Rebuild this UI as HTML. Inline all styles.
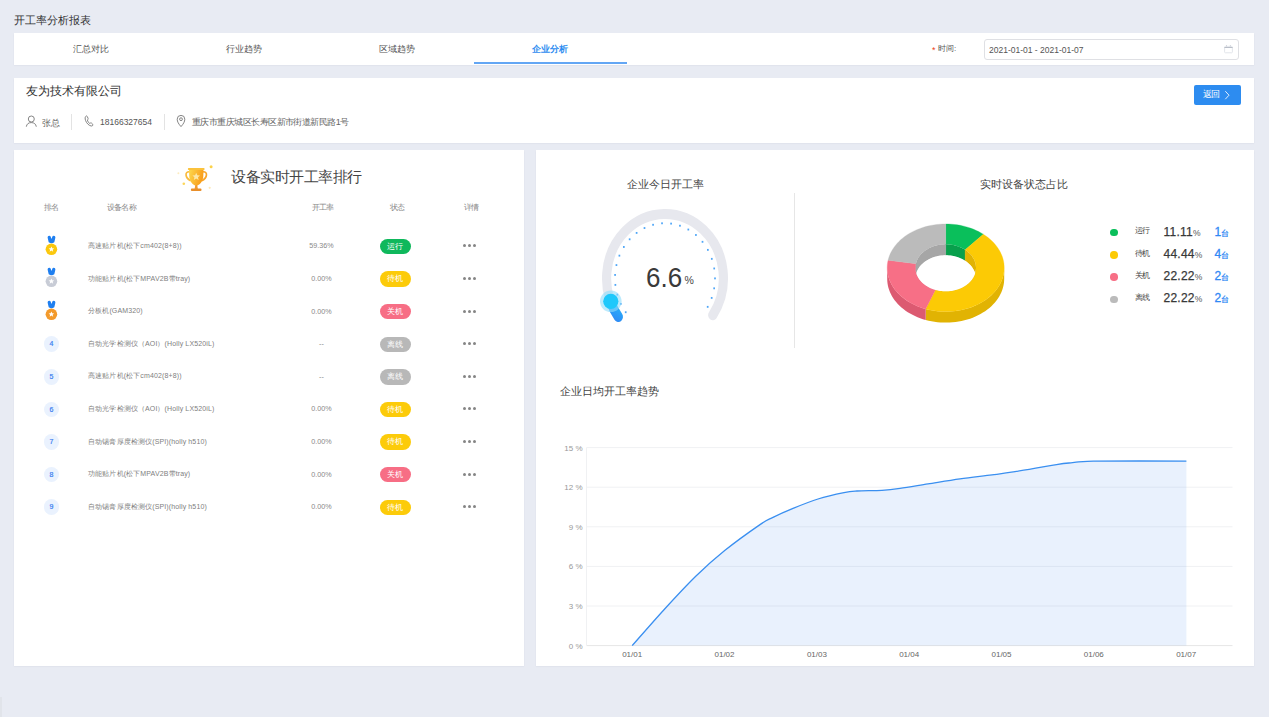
<!DOCTYPE html>
<html><head><meta charset="utf-8">
<style>
*{margin:0;padding:0;box-sizing:border-box}
html,body{width:1269px;height:717px;overflow:hidden;background:#e8ebf3;font-family:"Liberation Sans",sans-serif;color:#333}
.a{position:absolute;white-space:nowrap;line-height:1}
.card{position:absolute;background:#fff;box-shadow:0 0.5px 1.5px rgba(60,70,100,0.10)}
.tab{position:absolute;top:45px;width:153px;text-align:center;font-size:9px;color:#555;line-height:1}
.hd{position:absolute;top:204px;font-size:8px;letter-spacing:-0.8px;color:#888;line-height:1;white-space:nowrap}
.nm{position:absolute;left:88px;font-size:7px;letter-spacing:0.13px;color:#808080;line-height:1;white-space:nowrap}
.rt{position:absolute;left:291.5px;width:60px;text-align:center;font-size:7.2px;color:#888;line-height:1;margin-top:-0.7px}
.bd{position:absolute;left:380px;width:30.5px;height:15.4px;border-radius:8px;color:#fff;font-size:8px;line-height:15.4px;text-align:center;margin-top:-0.2px}
.dots{position:absolute;left:463px;width:13px;height:3px}
.dots i{position:absolute;top:0.2px;width:3px;height:3px;border-radius:50%;background:#858585}
.rk{position:absolute;left:43.8px;margin-top:-0.4px;width:15.5px;height:15.5px;border-radius:50%;background:#eaf2fe;color:#3a7ef0;font-size:7px;-webkit-text-stroke:0.2px #3a7ef0;line-height:15.5px;text-align:center}
</style></head><body>
<div class="a" style="left:14px;top:15px;font-size:11px;color:#333">开工率分析报表</div>
<div class="card" style="left:14px;top:33px;width:1240px;height:32px"></div>
<div class="tab" style="left:14px">汇总对比</div>
<div class="tab" style="left:167px">行业趋势</div>
<div class="tab" style="left:320px">区域趋势</div>
<div class="tab" style="left:473px;color:#2d8cf0;font-weight:bold">企业分析</div>
<div class="a" style="left:474px;top:62px;width:153px;height:2px;background:#63a6f4"></div>
<div class="a" style="left:932px;top:46px;font-size:9px;color:#ed4014">*</div>
<div class="a" style="left:938px;top:45px;font-size:8px;color:#555">时间:</div>
<div class="a" style="left:984px;top:39px;width:255px;height:21px;border:1.4px solid #dfe0e4;border-radius:3px"></div>
<div class="a" style="left:989px;top:45.5px;font-size:8.5px;color:#555">2021-01-01 - 2021-01-07</div>
<svg class="a" style="left:1220px;top:40px" width="16" height="16" viewBox="1220 40 16 16"><rect x="1224.6" y="46.4" width="7.8" height="6.4" rx="0.9" fill="none" stroke="#dfe2e8" stroke-width="0.9"/><line x1="1224.4" y1="47.5" x2="1232.6" y2="47.5" stroke="#b9bec8" stroke-width="1"/><line x1="1226.5" y1="45" x2="1226.5" y2="46.6" stroke="#d0d3da" stroke-width="0.9"/><line x1="1230.4" y1="45" x2="1230.4" y2="46.6" stroke="#d0d3da" stroke-width="0.9"/></svg>

<div class="card" style="left:14px;top:78px;width:1240px;height:65px"></div>
<div class="a" style="left:26px;top:85px;font-size:12px;color:#333">友为技术有限公司</div>
<svg class="a" style="left:25px;top:114px" width="13" height="14" viewBox="0 0 13 14"><circle cx="6.3" cy="5" r="3" fill="none" stroke="#777" stroke-width="0.9"/><path d="M1.3 12.7 Q2 8.6 6.3 8.6 Q10.6 8.6 11.3 12.7" fill="none" stroke="#777" stroke-width="0.9"/></svg>
<div class="a" style="left:42px;top:118.5px;font-size:9px;letter-spacing:-0.5px;color:#666">张总</div>
<div class="a" style="left:71px;top:114px;width:1px;height:16px;background:#e3e3e3"></div>
<svg class="a" style="left:84px;top:115px" width="10" height="12" viewBox="0 0 10 12"><path d="M2.3 1 C1 1.6 0.8 3.4 1.6 5.6 C2.6 8.2 4.8 10.6 7.2 11 C8.4 11.2 9.2 10.2 8.8 9.4 L7.4 8 C6.8 7.6 6.2 8.2 5.6 8.4 C4.6 7.8 3.6 6.2 3.4 5 C3.8 4.4 4.4 4 4 3.2 L3.2 1.4 C2.9 0.9 2.6 0.9 2.3 1 Z" fill="none" stroke="#777" stroke-width="0.9"/></svg>
<div class="a" style="left:100px;top:118px;font-size:8.5px;color:#555">18166327654</div>
<div class="a" style="left:164px;top:114px;width:1px;height:16px;background:#e3e3e3"></div>
<svg class="a" style="left:176px;top:114px" width="10" height="14" viewBox="0 0 10 14"><path d="M5 12.6 C2.6 10 1.2 7.6 1.2 5.2 A3.8 3.8 0 0 1 8.8 5.2 C8.8 7.6 7.4 10 5 12.6 Z" fill="none" stroke="#777" stroke-width="0.9"/><circle cx="5" cy="5.2" r="1.4" fill="none" stroke="#777" stroke-width="0.9"/></svg>
<div class="a" style="left:192px;top:118px;font-size:9px;letter-spacing:-0.55px;color:#666">重庆市重庆城区长寿区新市街道新民路1号</div>
<div class="a" style="left:1194px;top:85px;width:47px;height:20px;background:#2d8cf0;border-radius:2px"></div>
<div class="a" style="left:1203px;top:90.2px;font-size:9px;letter-spacing:-1px;color:#fff">返回</div>
<svg class="a" style="left:1223px;top:89px" width="8" height="12" viewBox="0 0 8 12"><path d="M2.3 2.2 L6 6.2 L2.3 10.2" fill="none" stroke="#fff" stroke-width="0.85"/></svg>

<div class="card" style="left:14px;top:150px;width:510px;height:516px"></div>
<div class="card" style="left:536px;top:150px;width:718px;height:516px"></div>

<div class="a" style="left:0;top:697px;width:1.5px;height:20px;background:#e1e4ea"></div>
<!-- LEFT_PANEL -->
<svg class="a" style="left:175px;top:160px" width="40" height="35" viewBox="0 0 40 35">
<defs><linearGradient id="tg" x1="0" y1="0" x2="1" y2="0.3"><stop offset="0" stop-color="#fdd84e"/><stop offset="1" stop-color="#f99d1a"/></linearGradient></defs>
<path d="M14.6 11.8 C9.6 11.2 9.8 17.6 15.6 20.8" fill="none" stroke="#f9bb3e" stroke-width="1.7"/>
<path d="M27.9 11.8 C32.9 11.2 32.7 17.6 26.9 20.8" fill="none" stroke="#f8a52a" stroke-width="1.7"/>
<path d="M14 9.6 L28.5 9.6 L28.3 16 C28 21.5 24.6 25.6 21.25 25.6 C17.9 25.6 14.5 21.5 14.2 16 Z" fill="url(#tg)"/>
<rect x="12.9" y="8" width="16.7" height="2.1" rx="0.8" fill="#fbc23c"/>
<path d="M20.3 25 L22.2 25 L22.9 28.9 L19.6 28.9 Z" fill="#f29a2c"/>
<rect x="15.9" y="28.6" width="10.6" height="2.3" rx="1" fill="#e98f2a"/>
<path d="M21.2 12.8 L22.3 15.3 L25 15.5 L23 17.3 L23.6 20 L21.2 18.6 L18.8 20 L19.4 17.3 L17.4 15.5 L20.1 15.3 Z" fill="#fde7a6"/>
<circle cx="36.1" cy="6.8" r="1.5" fill="#fbd24a"/>
<circle cx="8.8" cy="23.7" r="1.3" fill="#fcd65a"/>
<circle cx="3.4" cy="13.2" r="1" fill="#fdecc0"/>
<circle cx="34.7" cy="27.8" r="1.1" fill="#fde8b8"/>
</svg>
<div class="a" style="left:231px;top:169px;font-size:15px;letter-spacing:-0.5px;color:#444">设备实时开工率排行</div>
<div class="hd" style="left:44px">排名</div>
<div class="hd" style="left:107px">设备名称</div>
<div class="hd" style="left:312px">开工率</div>
<div class="hd" style="left:390px">状态</div>
<div class="hd" style="left:464px">详情</div>
<svg class="a" style="left:44px;top:234.5px" width="15" height="21" viewBox="0 0 15 21"><path d="M3.6 2.4 Q3.6 0.6 5.3 0.7 Q6.3 0.8 6.6 1.6 L7.5 4 L8.4 1.6 Q8.7 0.8 9.7 0.7 Q11.4 0.6 11.4 2.4 L10.3 7.2 Q7.5 9.4 4.7 7.2 Z" fill="#1f7ff0"/><circle cx="7.4" cy="14.3" r="5.8" fill="#fbc80e"/><path d="M7.4 11.4 L8.2 13.3 L10.2 13.4 L8.6 14.7 L9.2 16.7 L7.4 15.6 L5.6 16.7 L6.2 14.7 L4.6 13.4 L6.6 13.3 Z" fill="#fff"/></svg>
<div class="nm" style="top:242.0px" data-x1="183.1">高速贴片机(松下cm402(8+8))</div>
<div class="rt" style="top:243.0px">59.36%</div>
<div class="bd" style="top:238.9px;background:#0fb85c">运行</div>
<div class="dots" style="top:244.3px"><i style="left:0"></i><i style="left:5px"></i><i style="left:10px"></i></div>
<svg class="a" style="left:44px;top:267.1px" width="15" height="21" viewBox="0 0 15 21"><path d="M3.6 2.4 Q3.6 0.6 5.3 0.7 Q6.3 0.8 6.6 1.6 L7.5 4 L8.4 1.6 Q8.7 0.8 9.7 0.7 Q11.4 0.6 11.4 2.4 L10.3 7.2 Q7.5 9.4 4.7 7.2 Z" fill="#1f7ff0"/><circle cx="7.4" cy="14.3" r="5.8" fill="#c8ccd6"/><path d="M7.4 11.4 L8.2 13.3 L10.2 13.4 L8.6 14.7 L9.2 16.7 L7.4 15.6 L5.6 16.7 L6.2 14.7 L4.6 13.4 L6.6 13.3 Z" fill="#fff"/></svg>
<div class="nm" style="top:274.6px" data-x1="191.1">功能贴片机(松下MPAV2B带tray)</div>
<div class="rt" style="top:275.6px">0.00%</div>
<div class="bd" style="top:271.5px;background:#fccb0a">待机</div>
<div class="dots" style="top:276.9px"><i style="left:0"></i><i style="left:5px"></i><i style="left:10px"></i></div>
<svg class="a" style="left:44px;top:299.7px" width="15" height="21" viewBox="0 0 15 21"><path d="M3.6 2.4 Q3.6 0.6 5.3 0.7 Q6.3 0.8 6.6 1.6 L7.5 4 L8.4 1.6 Q8.7 0.8 9.7 0.7 Q11.4 0.6 11.4 2.4 L10.3 7.2 Q7.5 9.4 4.7 7.2 Z" fill="#1f7ff0"/><circle cx="7.4" cy="14.3" r="5.8" fill="#f39a2b"/><path d="M7.4 11.4 L8.2 13.3 L10.2 13.4 L8.6 14.7 L9.2 16.7 L7.4 15.6 L5.6 16.7 L6.2 14.7 L4.6 13.4 L6.6 13.3 Z" fill="#fff"/></svg>
<div class="nm" style="top:307.2px" data-x1="143.6">分板机(GAM320)</div>
<div class="rt" style="top:308.2px">0.00%</div>
<div class="bd" style="top:304.1px;background:#f76e85">关机</div>
<div class="dots" style="top:309.5px"><i style="left:0"></i><i style="left:5px"></i><i style="left:10px"></i></div>
<div class="rk" style="top:336.8px">4</div>
<div class="nm" style="top:339.8px" data-x1="215.7">自动光学检测仪（AOI）(Holly LX520iL)</div>
<div class="rt" style="top:340.8px">--</div>
<div class="bd" style="top:336.7px;background:#b8b8b8">离线</div>
<div class="dots" style="top:342.1px"><i style="left:0"></i><i style="left:5px"></i><i style="left:10px"></i></div>
<div class="rk" style="top:369.4px">5</div>
<div class="nm" style="top:372.4px" data-x1="183.1">高速贴片机(松下cm402(8+8))</div>
<div class="rt" style="top:373.4px">--</div>
<div class="bd" style="top:369.3px;background:#b8b8b8">离线</div>
<div class="dots" style="top:374.7px"><i style="left:0"></i><i style="left:5px"></i><i style="left:10px"></i></div>
<div class="rk" style="top:402.0px">6</div>
<div class="nm" style="top:405.0px" data-x1="215.6">自动光学检测仪（AOI）(Holly LX520iL)</div>
<div class="rt" style="top:406.0px">0.00%</div>
<div class="bd" style="top:401.9px;background:#fccb0a">待机</div>
<div class="dots" style="top:407.3px"><i style="left:0"></i><i style="left:5px"></i><i style="left:10px"></i></div>
<div class="rk" style="top:434.6px">7</div>
<div class="nm" style="top:437.6px" data-x1="208">自动锡膏厚度检测仪(SPI)(holly h510)</div>
<div class="rt" style="top:438.6px">0.00%</div>
<div class="bd" style="top:434.5px;background:#fccb0a">待机</div>
<div class="dots" style="top:439.9px"><i style="left:0"></i><i style="left:5px"></i><i style="left:10px"></i></div>
<div class="rk" style="top:467.2px">8</div>
<div class="nm" style="top:470.2px" data-x1="191.3">功能贴片机(松下MPAV2B带tray)</div>
<div class="rt" style="top:471.2px">0.00%</div>
<div class="bd" style="top:467.1px;background:#f76e85">关机</div>
<div class="dots" style="top:472.5px"><i style="left:0"></i><i style="left:5px"></i><i style="left:10px"></i></div>
<div class="rk" style="top:499.8px">9</div>
<div class="nm" style="top:502.8px" data-x1="208">自动锡膏厚度检测仪(SPI)(holly h510)</div>
<div class="rt" style="top:503.8px">0.00%</div>
<div class="bd" style="top:499.7px;background:#fccb0a">待机</div>
<div class="dots" style="top:505.1px"><i style="left:0"></i><i style="left:5px"></i><i style="left:10px"></i></div>
<!-- /LEFT_PANEL -->
<!-- RIGHT_PANEL -->
<svg class="a" style="left:585px;top:195px" width="160" height="140" viewBox="0 0 160 140">
<defs><linearGradient id="pg" x1="0" y1="1" x2="0.3" y2="0"><stop offset="0" stop-color="#2d8df6"/><stop offset="1" stop-color="#26b4fb"/></linearGradient></defs>
<g transform="translate(80.00 83.20) scale(1 1.1)">
<path d="M-46.64 35.15 A58.4 58.4 0 1 1 47.72 33.66" fill="none" stroke="#e7e8ee" stroke-width="9.2" stroke-linecap="round"/>
<rect x="-40.14" y="30.07" width="1.7" height="1.7" fill="#4fa6f7"/><rect x="-45.08" y="22.47" width="1.7" height="1.7" fill="#4fa6f7"/><rect x="-48.56" y="14.10" width="1.7" height="1.7" fill="#4fa6f7"/><rect x="-50.48" y="5.24" width="1.7" height="1.7" fill="#4fa6f7"/><rect x="-50.76" y="-3.82" width="1.7" height="1.7" fill="#4fa6f7"/><rect x="-49.41" y="-12.78" width="1.7" height="1.7" fill="#4fa6f7"/><rect x="-46.46" y="-21.35" width="1.7" height="1.7" fill="#4fa6f7"/><rect x="-42.01" y="-29.24" width="1.7" height="1.7" fill="#4fa6f7"/><rect x="-36.21" y="-36.21" width="1.7" height="1.7" fill="#4fa6f7"/><rect x="-29.24" y="-42.01" width="1.7" height="1.7" fill="#4fa6f7"/><rect x="-21.35" y="-46.46" width="1.7" height="1.7" fill="#4fa6f7"/><rect x="-12.78" y="-49.41" width="1.7" height="1.7" fill="#4fa6f7"/><rect x="-3.82" y="-50.76" width="1.7" height="1.7" fill="#4fa6f7"/><rect x="5.24" y="-50.48" width="1.7" height="1.7" fill="#4fa6f7"/><rect x="14.10" y="-48.56" width="1.7" height="1.7" fill="#4fa6f7"/><rect x="22.47" y="-45.08" width="1.7" height="1.7" fill="#4fa6f7"/><rect x="30.07" y="-40.14" width="1.7" height="1.7" fill="#4fa6f7"/><rect x="36.66" y="-33.92" width="1.7" height="1.7" fill="#4fa6f7"/><rect x="42.01" y="-26.60" width="1.7" height="1.7" fill="#4fa6f7"/><rect x="45.95" y="-18.44" width="1.7" height="1.7" fill="#4fa6f7"/><rect x="48.36" y="-9.70" width="1.7" height="1.7" fill="#4fa6f7"/><rect x="49.15" y="-0.68" width="1.7" height="1.7" fill="#4fa6f7"/><rect x="48.30" y="8.35" width="1.7" height="1.7" fill="#4fa6f7"/><rect x="45.83" y="17.07" width="1.7" height="1.7" fill="#4fa6f7"/><rect x="41.83" y="25.20" width="1.7" height="1.7" fill="#4fa6f7"/>
<path d="M-46.64 35.15 A58.4 58.4 0 0 1 -54.70 20.45" fill="none" stroke="url(#pg)" stroke-width="9.2" stroke-linecap="round"/>
</g>
<g transform="translate(80.00 83.20)">
<circle cx="-54.20" cy="23.10" r="10.8" fill="#8fdcfa" opacity="0.6"/>
<circle cx="-54.20" cy="23.10" r="7.6" fill="#1ec8fb"/>
</g></svg>
<div class="a" style="left:627px;top:178.5px;font-size:11px;color:#444">企业今日开工率</div>
<div class="a" style="left:646px;top:263.5px;font-size:26px;color:#3a3a3a;transform:scaleY(1.05);transform-origin:0 0;line-height:1">6.6</div>
<div class="a" style="left:684.5px;top:275px;font-size:10.5px;color:#444;line-height:1">%</div>
<div class="a" style="left:793.5px;top:193px;width:1px;height:155px;background:#e6e6e6"></div>
<div class="a" style="left:980px;top:178.5px;font-size:11px;color:#444">实时设备状态占比</div>
<svg class="a" style="left:0;top:0" width="1269" height="717" viewBox="0 0 1269 717"><path d="M1004.20 267.80 L1004.12 270.07 L1003.89 272.34 L1003.49 274.59 L1002.94 276.83 L1002.24 279.04 L1001.39 281.22 L1000.38 283.36 L999.23 285.46 L997.94 287.52 L996.50 289.52 L994.93 291.46 L993.22 293.34 L991.39 295.15 L989.43 296.89 L987.36 298.55 L985.17 300.13 L982.88 301.62 L980.49 303.02 L978.00 304.32 L975.43 305.52 L972.77 306.63 L970.05 307.63 L967.26 308.52 L964.41 309.30 L961.51 309.97 L958.56 310.53 L955.59 310.97 L952.58 311.30 L949.56 311.50 L946.53 311.60 L943.49 311.57 L940.46 311.42 L937.45 311.16 L934.46 310.78 L931.49 310.29 L928.57 309.68 L925.69 308.96 L925.69 319.96 L928.57 320.68 L931.49 321.29 L934.46 321.78 L937.45 322.16 L940.46 322.42 L943.49 322.57 L946.53 322.60 L949.56 322.50 L952.58 322.30 L955.59 321.97 L958.56 321.53 L961.51 320.97 L964.41 320.30 L967.26 319.52 L970.05 318.63 L972.77 317.63 L975.43 316.52 L978.00 315.32 L980.49 314.02 L982.88 312.62 L985.17 311.13 L987.36 309.55 L989.43 307.89 L991.39 306.15 L993.22 304.34 L994.93 302.46 L996.50 300.52 L997.94 298.52 L999.23 296.46 L1000.38 294.36 L1001.39 292.22 L1002.24 290.04 L1002.94 287.83 L1003.49 285.59 L1003.89 283.34 L1004.12 281.07 L1004.20 278.80 Z" fill="#e1b303"/><path d="M925.69 308.96 L922.92 308.14 L920.21 307.22 L917.56 306.20 L914.99 305.08 L912.50 303.86 L910.09 302.55 L907.77 301.15 L905.55 299.66 L903.44 298.09 L901.44 296.44 L899.55 294.72 L897.78 292.92 L896.13 291.06 L894.62 289.15 L893.23 287.17 L891.98 285.15 L890.87 283.08 L889.91 280.97 L889.08 278.83 L888.41 276.66 L887.88 274.46 L887.50 272.25 L887.28 270.03 L887.20 267.80 L887.20 278.80 L887.28 281.03 L887.50 283.25 L887.88 285.46 L888.41 287.66 L889.08 289.83 L889.91 291.97 L890.87 294.08 L891.98 296.15 L893.23 298.17 L894.62 300.15 L896.13 302.06 L897.78 303.92 L899.55 305.72 L901.44 307.44 L903.44 309.09 L905.55 310.66 L907.77 312.15 L910.09 313.55 L912.50 314.86 L914.99 316.08 L917.56 317.20 L920.21 318.22 L922.92 319.14 L925.69 319.96 Z" fill="#dc5a71"/><path d="M945.70 224.00 L948.62 224.05 L951.52 224.22 L954.42 224.49 L957.29 224.87 L960.14 225.35 L962.94 225.95 L965.71 226.64 L968.42 227.44 L971.08 228.34 L973.68 229.33 L976.20 230.43 L978.65 231.61 L981.02 232.89 L983.30 234.25 L965.18 249.80 L964.00 249.07 L962.77 248.38 L961.50 247.75 L960.19 247.16 L958.85 246.63 L957.47 246.15 L956.06 245.72 L954.63 245.34 L953.18 245.03 L951.70 244.77 L950.22 244.56 L948.72 244.42 L947.21 244.33 L945.70 244.30 Z" fill="#0abf5b" stroke="#0abf5b" stroke-width="0.3"/><path d="M983.30 234.25 L985.57 235.75 L987.73 237.33 L989.78 239.00 L991.71 240.74 L993.51 242.56 L995.19 244.45 L996.74 246.39 L998.15 248.40 L999.42 250.45 L1000.54 252.55 L1001.52 254.70 L1002.35 256.87 L1003.03 259.08 L1003.55 261.31 L1003.93 263.56 L1004.14 265.82 L1004.20 268.08 L1004.10 270.35 L1003.85 272.60 L1003.44 274.85 L1002.87 277.07 L1002.16 279.27 L1001.29 281.44 L1000.27 283.58 L999.11 285.67 L997.81 287.71 L996.36 289.70 L994.78 291.63 L993.07 293.50 L991.23 295.30 L989.28 297.02 L987.20 298.67 L985.01 300.24 L982.72 301.71 L980.33 303.10 L977.85 304.39 L975.28 305.59 L972.63 306.68 L969.91 307.67 L967.12 308.56 L964.28 309.33 L961.39 310.00 L958.45 310.55 L955.49 310.98 L952.49 311.30 L949.48 311.51 L946.46 311.60 L943.43 311.57 L940.41 311.42 L937.41 311.16 L934.43 310.78 L931.47 310.29 L928.56 309.68 L925.69 308.96 L935.34 289.88 L936.82 290.27 L938.33 290.59 L939.86 290.86 L941.41 291.06 L942.96 291.20 L944.53 291.28 L946.09 291.30 L947.66 291.25 L949.22 291.14 L950.77 290.97 L952.31 290.73 L953.83 290.44 L955.32 290.08 L956.80 289.67 L958.24 289.19 L959.65 288.66 L961.02 288.08 L962.35 287.43 L963.64 286.74 L964.87 286.00 L966.06 285.20 L967.19 284.36 L968.27 283.48 L969.28 282.55 L970.24 281.59 L971.12 280.59 L971.94 279.55 L972.69 278.48 L973.36 277.39 L973.97 276.26 L974.49 275.12 L974.94 273.96 L975.31 272.78 L975.61 271.58 L975.82 270.38 L975.95 269.17 L976.00 267.95 L975.97 266.74 L975.86 265.52 L975.67 264.32 L975.39 263.12 L975.04 261.94 L974.61 260.77 L974.11 259.62 L973.52 258.49 L972.86 257.39 L972.13 256.31 L971.33 255.27 L970.46 254.26 L969.53 253.28 L968.53 252.35 L967.47 251.45 L966.35 250.60 L965.18 249.80 Z" fill="#fcca05" stroke="#fcca05" stroke-width="0.3"/><path d="M925.69 308.96 L922.88 308.13 L920.12 307.19 L917.44 306.15 L914.83 305.00 L912.30 303.76 L909.86 302.42 L907.52 300.99 L905.28 299.46 L903.15 297.86 L901.13 296.17 L899.23 294.41 L897.46 292.57 L895.81 290.67 L894.30 288.71 L892.92 286.69 L891.69 284.63 L890.60 282.51 L889.66 280.36 L888.87 278.18 L888.22 275.96 L887.74 273.73 L887.41 271.48 L887.23 269.22 L887.21 266.95 L887.35 264.69 L887.64 262.43 L888.09 260.19 L915.86 263.72 L915.63 264.92 L915.48 266.13 L915.41 267.34 L915.42 268.56 L915.51 269.77 L915.68 270.98 L915.93 272.18 L916.26 273.37 L916.67 274.54 L917.16 275.69 L917.73 276.83 L918.36 277.94 L919.08 279.02 L919.86 280.07 L920.71 281.09 L921.63 282.08 L922.62 283.02 L923.66 283.93 L924.76 284.79 L925.93 285.61 L927.14 286.37 L928.40 287.09 L929.71 287.76 L931.06 288.38 L932.45 288.93 L933.88 289.44 L935.34 289.88 Z" fill="#f76f86" stroke="#f76f86" stroke-width="0.3"/><path d="M888.09 260.19 L888.69 257.97 L889.45 255.78 L890.35 253.62 L891.40 251.50 L892.60 249.42 L893.94 247.39 L895.42 245.41 L897.03 243.50 L898.78 241.64 L900.64 239.86 L902.63 238.16 L904.74 236.53 L906.95 234.99 L909.27 233.53 L911.68 232.17 L914.19 230.90 L916.78 229.73 L919.45 228.66 L922.18 227.70 L924.98 226.84 L927.84 226.09 L930.74 225.46 L933.69 224.93 L936.66 224.53 L939.66 224.23 L942.68 224.06 L945.70 224.00 L945.70 244.30 L944.13 244.33 L942.57 244.43 L941.02 244.58 L939.48 244.80 L937.95 245.08 L936.45 245.42 L934.97 245.82 L933.52 246.28 L932.10 246.80 L930.72 247.37 L929.38 248.00 L928.08 248.68 L926.83 249.41 L925.63 250.19 L924.48 251.02 L923.39 251.90 L922.36 252.81 L921.40 253.77 L920.49 254.76 L919.66 255.79 L918.89 256.85 L918.20 257.94 L917.58 259.05 L917.03 260.19 L916.56 261.35 L916.17 262.53 L915.86 263.72 Z" fill="#bbbbbb" stroke="#bbbbbb" stroke-width="0.3"/><clipPath id="hc"><path d="M945.70 244.30 L947.27 244.33 L948.84 244.43 L950.40 244.58 L951.95 244.81 L953.48 245.09 L954.99 245.43 L956.47 245.84 L957.93 246.30 L959.35 246.82 L960.74 247.40 L962.08 248.03 L963.38 248.72 L964.64 249.45 L965.84 250.24 L966.99 251.08 L968.08 251.95 L969.11 252.88 L970.07 253.84 L970.98 254.84 L971.81 255.87 L972.57 256.94 L973.26 258.04 L973.88 259.16 L974.42 260.31 L974.88 261.47 L975.27 262.66 L975.57 263.85 L975.79 265.06 L975.94 266.28 L976.00 267.49 L975.98 268.71 L975.87 269.93 L975.69 271.14 L975.43 272.35 L975.08 273.54 L974.66 274.71 L974.16 275.87 L973.58 277.00 L972.93 278.11 L972.20 279.20 L971.40 280.25 L970.53 281.27 L969.60 282.25 L968.60 283.19 L967.54 284.09 L966.42 284.95 L965.24 285.76 L964.02 286.52 L962.74 287.23 L961.41 287.89 L960.05 288.50 L958.64 289.05 L957.20 289.54 L955.73 289.97 L954.24 290.35 L952.72 290.66 L951.18 290.91 L949.62 291.10 L948.06 291.23 L946.49 291.29 L944.91 291.29 L943.34 291.23 L941.78 291.10 L940.22 290.91 L938.68 290.66 L937.16 290.35 L935.67 289.97 L934.20 289.54 L932.76 289.05 L931.35 288.50 L929.99 287.89 L928.66 287.23 L927.38 286.52 L926.16 285.76 L924.98 284.95 L923.86 284.09 L922.80 283.19 L921.80 282.25 L920.87 281.27 L920.00 280.25 L919.20 279.20 L918.47 278.11 L917.82 277.00 L917.24 275.87 L916.74 274.71 L916.32 273.54 L915.97 272.35 L915.71 271.14 L915.53 269.93 L915.42 268.71 L915.40 267.49 L915.46 266.28 L915.61 265.06 L915.83 263.85 L916.13 262.66 L916.52 261.47 L916.98 260.31 L917.52 259.16 L918.14 258.04 L918.83 256.94 L919.59 255.87 L920.42 254.84 L921.33 253.84 L922.29 252.88 L923.32 251.95 L924.41 251.08 L925.56 250.24 L926.76 249.45 L928.02 248.72 L929.32 248.03 L930.66 247.40 L932.05 246.82 L933.47 246.30 L934.93 245.84 L936.41 245.43 L937.92 245.09 L939.45 244.81 L941.00 244.58 L942.56 244.43 L944.13 244.33 L945.70 244.30 Z"/></clipPath><g clip-path="url(#hc)"><path d="M945.70 244.30 L947.21 244.33 L948.72 244.42 L950.22 244.56 L951.70 244.77 L953.18 245.03 L954.63 245.34 L956.06 245.72 L957.47 246.15 L958.85 246.63 L960.19 247.16 L961.50 247.75 L962.77 248.38 L964.00 249.07 L965.18 249.80 L965.18 260.80 L964.00 260.07 L962.77 259.38 L961.50 258.75 L960.19 258.16 L958.85 257.63 L957.47 257.15 L956.06 256.72 L954.63 256.34 L953.18 256.03 L951.70 255.77 L950.22 255.56 L948.72 255.42 L947.21 255.33 L945.70 255.30 Z" fill="#08a04c" stroke="#08a04c" stroke-width="0.4"/><path d="M965.18 249.80 L966.35 250.60 L967.47 251.45 L968.53 252.35 L969.53 253.28 L970.46 254.26 L971.33 255.27 L972.13 256.31 L972.86 257.39 L973.52 258.49 L974.11 259.62 L974.61 260.77 L975.04 261.94 L975.39 263.12 L975.67 264.32 L975.86 265.52 L975.97 266.74 L976.00 267.95 L975.95 269.17 L975.82 270.38 L975.61 271.58 L975.31 272.78 L974.94 273.96 L974.49 275.12 L973.97 276.26 L973.36 277.39 L972.69 278.48 L971.94 279.55 L971.12 280.59 L970.24 281.59 L969.28 282.55 L968.27 283.48 L967.19 284.36 L966.06 285.20 L964.87 286.00 L963.64 286.74 L962.35 287.43 L961.02 288.08 L959.65 288.66 L958.24 289.19 L956.80 289.67 L955.32 290.08 L953.83 290.44 L952.31 290.73 L950.77 290.97 L949.22 291.14 L947.66 291.25 L946.09 291.30 L944.53 291.28 L942.96 291.20 L941.41 291.06 L939.86 290.86 L938.33 290.59 L936.82 290.27 L935.34 289.88 L935.34 300.88 L936.82 301.27 L938.33 301.59 L939.86 301.86 L941.41 302.06 L942.96 302.20 L944.53 302.28 L946.09 302.30 L947.66 302.25 L949.22 302.14 L950.77 301.97 L952.31 301.73 L953.83 301.44 L955.32 301.08 L956.80 300.67 L958.24 300.19 L959.65 299.66 L961.02 299.08 L962.35 298.43 L963.64 297.74 L964.87 297.00 L966.06 296.20 L967.19 295.36 L968.27 294.48 L969.28 293.55 L970.24 292.59 L971.12 291.59 L971.94 290.55 L972.69 289.48 L973.36 288.39 L973.97 287.26 L974.49 286.12 L974.94 284.96 L975.31 283.78 L975.61 282.58 L975.82 281.38 L975.95 280.17 L976.00 278.95 L975.97 277.74 L975.86 276.52 L975.67 275.32 L975.39 274.12 L975.04 272.94 L974.61 271.77 L974.11 270.62 L973.52 269.49 L972.86 268.39 L972.13 267.31 L971.33 266.27 L970.46 265.26 L969.53 264.28 L968.53 263.35 L967.47 262.45 L966.35 261.60 L965.18 260.80 Z" fill="#e1b303" stroke="#e1b303" stroke-width="0.4"/><path d="M935.34 289.88 L933.88 289.44 L932.45 288.93 L931.06 288.38 L929.71 287.76 L928.40 287.09 L927.14 286.37 L925.93 285.61 L924.76 284.79 L923.66 283.93 L922.62 283.02 L921.63 282.08 L920.71 281.09 L919.86 280.07 L919.08 279.02 L918.36 277.94 L917.73 276.83 L917.16 275.69 L916.67 274.54 L916.26 273.37 L915.93 272.18 L915.68 270.98 L915.51 269.77 L915.42 268.56 L915.41 267.34 L915.48 266.13 L915.63 264.92 L915.86 263.72 L915.86 274.72 L915.63 275.92 L915.48 277.13 L915.41 278.34 L915.42 279.56 L915.51 280.77 L915.68 281.98 L915.93 283.18 L916.26 284.37 L916.67 285.54 L917.16 286.69 L917.73 287.83 L918.36 288.94 L919.08 290.02 L919.86 291.07 L920.71 292.09 L921.63 293.08 L922.62 294.02 L923.66 294.93 L924.76 295.79 L925.93 296.61 L927.14 297.37 L928.40 298.09 L929.71 298.76 L931.06 299.38 L932.45 299.93 L933.88 300.44 L935.34 300.88 Z" fill="#dc5a71" stroke="#dc5a71" stroke-width="0.4"/><path d="M915.86 263.72 L916.17 262.53 L916.56 261.35 L917.03 260.19 L917.58 259.05 L918.20 257.94 L918.89 256.85 L919.66 255.79 L920.49 254.76 L921.40 253.77 L922.36 252.81 L923.39 251.90 L924.48 251.02 L925.63 250.19 L926.83 249.41 L928.08 248.68 L929.38 248.00 L930.72 247.37 L932.10 246.80 L933.52 246.28 L934.97 245.82 L936.45 245.42 L937.95 245.08 L939.48 244.80 L941.02 244.58 L942.57 244.43 L944.13 244.33 L945.70 244.30 L945.70 255.30 L944.13 255.33 L942.57 255.43 L941.02 255.58 L939.48 255.80 L937.95 256.08 L936.45 256.42 L934.97 256.82 L933.52 257.28 L932.10 257.80 L930.72 258.37 L929.38 259.00 L928.08 259.68 L926.83 260.41 L925.63 261.19 L924.48 262.02 L923.39 262.90 L922.36 263.81 L921.40 264.77 L920.49 265.76 L919.66 266.79 L918.89 267.85 L918.20 268.94 L917.58 270.05 L917.03 271.19 L916.56 272.35 L916.17 273.53 L915.86 274.72 Z" fill="#a6a6a6" stroke="#a6a6a6" stroke-width="0.4"/><path d="M945.70 255.30 L947.27 255.33 L948.84 255.43 L950.40 255.58 L951.95 255.81 L953.48 256.09 L954.99 256.43 L956.47 256.84 L957.93 257.30 L959.35 257.82 L960.74 258.40 L962.08 259.03 L963.38 259.72 L964.64 260.45 L965.84 261.24 L966.99 262.08 L968.08 262.95 L969.11 263.88 L970.07 264.84 L970.98 265.84 L971.81 266.87 L972.57 267.94 L973.26 269.04 L973.88 270.16 L974.42 271.31 L974.88 272.47 L975.27 273.66 L975.57 274.85 L975.79 276.06 L975.94 277.28 L976.00 278.49 L975.98 279.71 L975.87 280.93 L975.69 282.14 L975.43 283.35 L975.08 284.54 L974.66 285.71 L974.16 286.87 L973.58 288.00 L972.93 289.11 L972.20 290.20 L971.40 291.25 L970.53 292.27 L969.60 293.25 L968.60 294.19 L967.54 295.09 L966.42 295.95 L965.24 296.76 L964.02 297.52 L962.74 298.23 L961.41 298.89 L960.05 299.50 L958.64 300.05 L957.20 300.54 L955.73 300.97 L954.24 301.35 L952.72 301.66 L951.18 301.91 L949.62 302.10 L948.06 302.23 L946.49 302.29 L944.91 302.29 L943.34 302.23 L941.78 302.10 L940.22 301.91 L938.68 301.66 L937.16 301.35 L935.67 300.97 L934.20 300.54 L932.76 300.05 L931.35 299.50 L929.99 298.89 L928.66 298.23 L927.38 297.52 L926.16 296.76 L924.98 295.95 L923.86 295.09 L922.80 294.19 L921.80 293.25 L920.87 292.27 L920.00 291.25 L919.20 290.20 L918.47 289.11 L917.82 288.00 L917.24 286.87 L916.74 285.71 L916.32 284.54 L915.97 283.35 L915.71 282.14 L915.53 280.93 L915.42 279.71 L915.40 278.49 L915.46 277.28 L915.61 276.06 L915.83 274.85 L916.13 273.66 L916.52 272.47 L916.98 271.31 L917.52 270.16 L918.14 269.04 L918.83 267.94 L919.59 266.87 L920.42 265.84 L921.33 264.84 L922.29 263.88 L923.32 262.95 L924.41 262.08 L925.56 261.24 L926.76 260.45 L928.02 259.72 L929.32 259.03 L930.66 258.40 L932.05 257.82 L933.47 257.30 L934.93 256.84 L936.41 256.43 L937.92 256.09 L939.45 255.81 L941.00 255.58 L942.56 255.43 L944.13 255.33 L945.70 255.30 Z" fill="#fff"/></g></svg>
<div class="a" style="left:1110.2px;top:228.8px;width:7.6px;height:7.6px;border-radius:50%;background:#0abf5b"></div>
<div class="a" style="left:1134.5px;top:227.4px;font-size:8px;letter-spacing:-0.3px;color:#444;line-height:1">运行</div>
<div class="a" style="left:1163.5px;top:225.6px;font-size:12px;font-weight:normal;-webkit-text-stroke:0.25px #383838;letter-spacing:0.25px;color:#383838;line-height:1">11.11<span style="font-size:8.5px;-webkit-text-stroke:0;letter-spacing:0;color:#555">%</span></div>
<div class="a" style="left:1214.5px;top:225.6px;font-size:12px;font-weight:normal;-webkit-text-stroke:0.3px #2f89f5;color:#2f89f5;line-height:1">1<span style="font-size:8px;-webkit-text-stroke:0.25px #2f89f5">台</span></div>
<div class="a" style="left:1110.2px;top:251.0px;width:7.6px;height:7.6px;border-radius:50%;background:#fcca05"></div>
<div class="a" style="left:1134.5px;top:249.6px;font-size:8px;letter-spacing:-0.3px;color:#444;line-height:1">待机</div>
<div class="a" style="left:1163.5px;top:247.8px;font-size:12px;font-weight:normal;-webkit-text-stroke:0.25px #383838;letter-spacing:0.25px;color:#383838;line-height:1">44.44<span style="font-size:8.5px;-webkit-text-stroke:0;letter-spacing:0;color:#555">%</span></div>
<div class="a" style="left:1214.5px;top:247.8px;font-size:12px;font-weight:normal;-webkit-text-stroke:0.3px #2f89f5;color:#2f89f5;line-height:1">4<span style="font-size:8px;-webkit-text-stroke:0.25px #2f89f5">台</span></div>
<div class="a" style="left:1110.2px;top:273.3px;width:7.6px;height:7.6px;border-radius:50%;background:#f76f86"></div>
<div class="a" style="left:1134.5px;top:271.9px;font-size:8px;letter-spacing:-0.3px;color:#444;line-height:1">关机</div>
<div class="a" style="left:1163.5px;top:270.1px;font-size:12px;font-weight:normal;-webkit-text-stroke:0.25px #383838;letter-spacing:0.25px;color:#383838;line-height:1">22.22<span style="font-size:8.5px;-webkit-text-stroke:0;letter-spacing:0;color:#555">%</span></div>
<div class="a" style="left:1214.5px;top:270.1px;font-size:12px;font-weight:normal;-webkit-text-stroke:0.3px #2f89f5;color:#2f89f5;line-height:1">2<span style="font-size:8px;-webkit-text-stroke:0.25px #2f89f5">台</span></div>
<div class="a" style="left:1110.2px;top:295.5px;width:7.6px;height:7.6px;border-radius:50%;background:#bbbbbb"></div>
<div class="a" style="left:1134.5px;top:294.1px;font-size:8px;letter-spacing:-0.3px;color:#444;line-height:1">离线</div>
<div class="a" style="left:1163.5px;top:292.3px;font-size:12px;font-weight:normal;-webkit-text-stroke:0.25px #383838;letter-spacing:0.25px;color:#383838;line-height:1">22.22<span style="font-size:8.5px;-webkit-text-stroke:0;letter-spacing:0;color:#555">%</span></div>
<div class="a" style="left:1214.5px;top:292.3px;font-size:12px;font-weight:normal;-webkit-text-stroke:0.3px #2f89f5;color:#2f89f5;line-height:1">2<span style="font-size:8px;-webkit-text-stroke:0.25px #2f89f5">台</span></div>
<div class="a" style="left:560px;top:385.7px;font-size:11px;color:#444">企业日均开工率趋势</div>
<div class="a" style="left:540px;width:42.5px;text-align:right;top:642.5px;font-size:8px;color:#999;line-height:1">0 %</div>
<div class="a" style="left:540px;width:42.5px;text-align:right;top:602.9px;font-size:8px;color:#999;line-height:1">3 %</div>
<div class="a" style="left:540px;width:42.5px;text-align:right;top:563.3px;font-size:8px;color:#999;line-height:1">6 %</div>
<div class="a" style="left:540px;width:42.5px;text-align:right;top:523.7px;font-size:8px;color:#999;line-height:1">9 %</div>
<div class="a" style="left:540px;width:42.5px;text-align:right;top:484.1px;font-size:8px;color:#999;line-height:1">12 %</div>
<div class="a" style="left:540px;width:42.5px;text-align:right;top:444.5px;font-size:8px;color:#999;line-height:1">15 %</div>
<div class="a" style="left:612.2px;width:40px;text-align:center;top:650.5px;font-size:8px;color:#666;line-height:1">01/01</div>
<div class="a" style="left:704.5px;width:40px;text-align:center;top:650.5px;font-size:8px;color:#666;line-height:1">01/02</div>
<div class="a" style="left:796.9px;width:40px;text-align:center;top:650.5px;font-size:8px;color:#666;line-height:1">01/03</div>
<div class="a" style="left:889.2px;width:40px;text-align:center;top:650.5px;font-size:8px;color:#666;line-height:1">01/04</div>
<div class="a" style="left:981.5px;width:40px;text-align:center;top:650.5px;font-size:8px;color:#666;line-height:1">01/05</div>
<div class="a" style="left:1073.8px;width:40px;text-align:center;top:650.5px;font-size:8px;color:#666;line-height:1">01/06</div>
<div class="a" style="left:1166.2px;width:40px;text-align:center;top:650.5px;font-size:8px;color:#666;line-height:1">01/07</div>
<svg class="a" style="left:0;top:0" width="1269" height="717" viewBox="0 0 1269 717"><line x1="586.5" y1="645.6" x2="1232.5" y2="645.6" stroke="#e6e6e6" stroke-width="1"/><line x1="586.5" y1="606.0" x2="1232.5" y2="606.0" stroke="#f0f1f3" stroke-width="1"/><line x1="586.5" y1="566.4" x2="1232.5" y2="566.4" stroke="#f0f1f3" stroke-width="1"/><line x1="586.5" y1="526.8" x2="1232.5" y2="526.8" stroke="#f0f1f3" stroke-width="1"/><line x1="586.5" y1="487.2" x2="1232.5" y2="487.2" stroke="#f0f1f3" stroke-width="1"/><line x1="586.5" y1="447.6" x2="1232.5" y2="447.6" stroke="#f0f1f3" stroke-width="1"/><line x1="586.5" y1="447.6" x2="586.5" y2="645.6" stroke="#f0f1f3" stroke-width="1"/><path d="M632.20 645.60 C637.50 639.62 653.37 621.30 664.00 609.70 C674.63 598.10 685.83 585.90 696.00 576.00 C706.17 566.10 714.33 558.87 725.00 550.30 C735.67 541.73 752.00 530.10 760.00 524.60 C768.00 519.10 767.58 519.97 773.00 517.30 C778.42 514.63 785.00 511.65 792.50 508.60 C800.00 505.55 809.42 501.67 818.00 499.00 C826.58 496.33 837.50 493.93 844.00 492.60 C850.50 491.27 850.67 491.38 857.00 491.00 C863.33 490.62 874.83 490.73 882.00 490.30 C889.17 489.87 892.33 489.47 900.00 488.40 C907.67 487.33 918.00 485.50 928.00 483.90 C938.00 482.30 949.33 480.30 960.00 478.80 C970.67 477.30 982.83 476.08 992.00 474.90 C1001.17 473.72 1004.25 473.42 1015.00 471.70 C1025.75 469.98 1046.92 466.10 1056.50 464.60 C1066.08 463.10 1066.37 463.28 1072.50 462.70 C1078.63 462.12 1074.32 461.37 1093.30 461.10 C1112.28 460.83 1170.88 461.10 1186.40 461.10 L1186.4 645.6 L632.2 645.6 Z" fill="#3a86f0" fill-opacity="0.115"/><path d="M632.20 645.60 C637.50 639.62 653.37 621.30 664.00 609.70 C674.63 598.10 685.83 585.90 696.00 576.00 C706.17 566.10 714.33 558.87 725.00 550.30 C735.67 541.73 752.00 530.10 760.00 524.60 C768.00 519.10 767.58 519.97 773.00 517.30 C778.42 514.63 785.00 511.65 792.50 508.60 C800.00 505.55 809.42 501.67 818.00 499.00 C826.58 496.33 837.50 493.93 844.00 492.60 C850.50 491.27 850.67 491.38 857.00 491.00 C863.33 490.62 874.83 490.73 882.00 490.30 C889.17 489.87 892.33 489.47 900.00 488.40 C907.67 487.33 918.00 485.50 928.00 483.90 C938.00 482.30 949.33 480.30 960.00 478.80 C970.67 477.30 982.83 476.08 992.00 474.90 C1001.17 473.72 1004.25 473.42 1015.00 471.70 C1025.75 469.98 1046.92 466.10 1056.50 464.60 C1066.08 463.10 1066.37 463.28 1072.50 462.70 C1078.63 462.12 1074.32 461.37 1093.30 461.10 C1112.28 460.83 1170.88 461.10 1186.40 461.10" fill="none" stroke="#3a8ff0" stroke-width="1.3"/></svg>
<!-- /RIGHT_PANEL -->
</body></html>
